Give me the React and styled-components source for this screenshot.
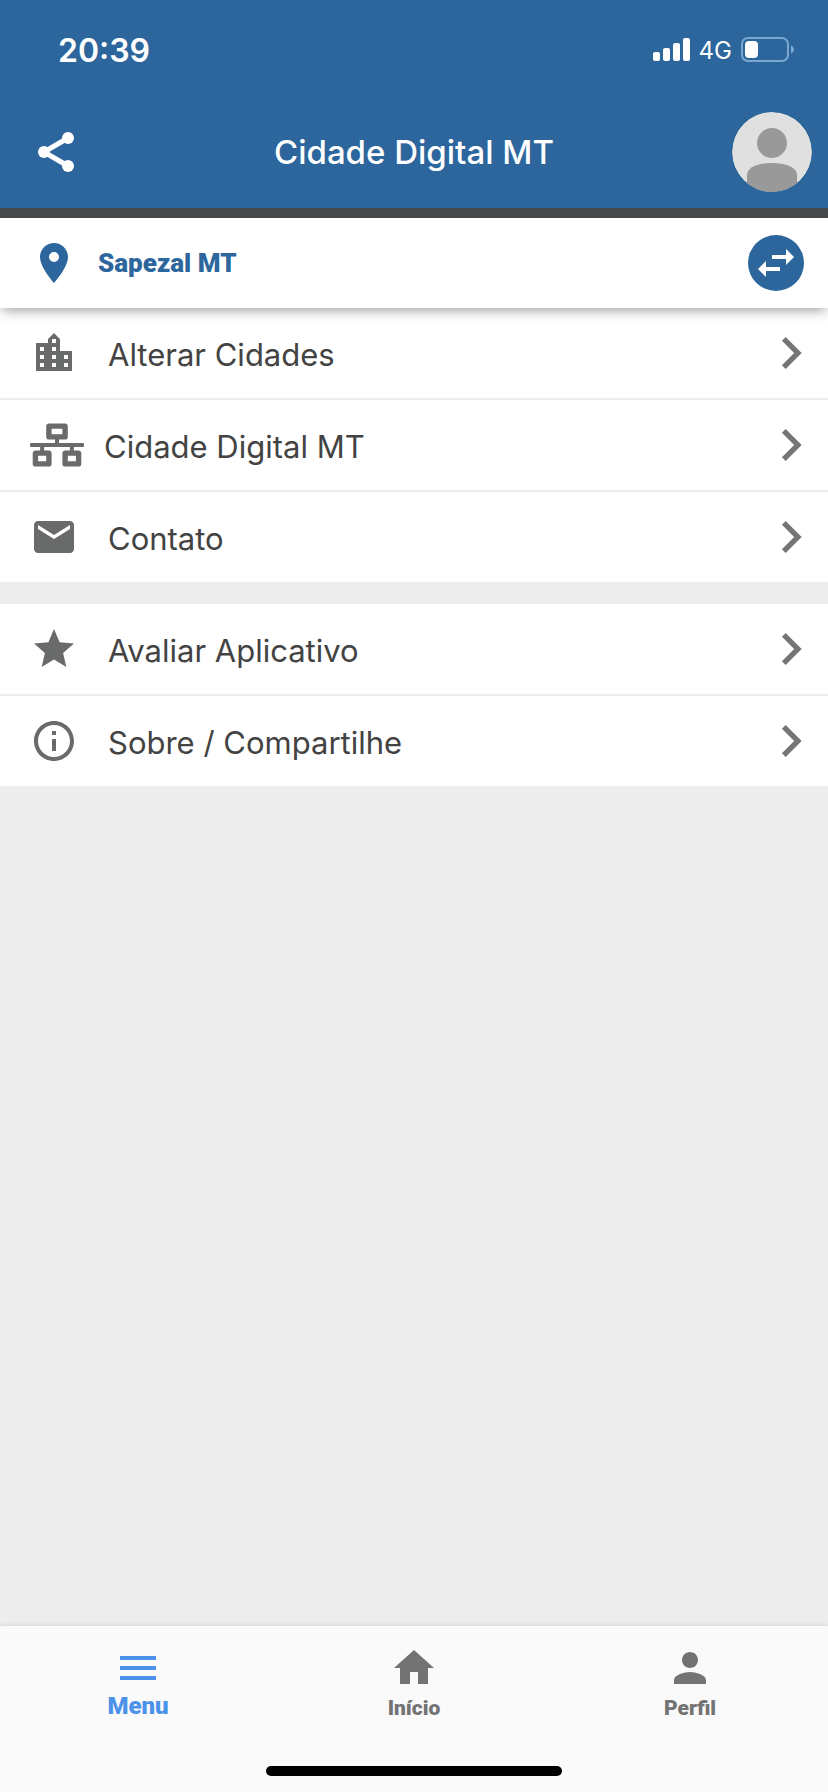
import React, { useState } from 'react';
import styled, { createGlobalStyle } from 'styled-components';
import {
  MdLocationOn,
  MdSwapHoriz,
  MdLocationCity,
  MdEmail,
  MdStar,
  MdInfoOutline,
  MdChevronRight,
  MdMenu,
  MdHome,
  MdPerson
} from 'react-icons/md';
import { FaNetworkWired } from 'react-icons/fa';

const colors = {
  primary: '#2c669c',
  strip: '#45484a',
  background: '#ededed',
  surface: '#ffffff',
  tabBar: '#fafafa',
  icon: '#696b6b',
  chevron: '#757575',
  text: '#434343',
  active: '#4b92e8',
  inactive: '#737373'
};

const GlobalStyle = createGlobalStyle`
  * {
    box-sizing: border-box;
  }

  body {
    margin: 0;
    background: ${colors.background};
    font-family: Inter, 'Liberation Sans', sans-serif;
  }

  button {
    border: none;
    padding: 0;
    background: none;
    font-family: inherit;
    cursor: pointer;
  }
`;

const Page = styled.div`
  min-height: 100vh;
  display: flex;
  flex-direction: column;
  background: ${colors.background};
`;

const Header = styled.header`
  position: relative;
  z-index: 2;
  background: ${colors.primary};
  color: white;
  padding-bottom: 4px;
  border-bottom: 10px solid ${colors.strip};
  box-sizing: content-box;
`;

const StatusBar = styled.div`
  height: 100px;
  padding: 0 34px 0 58px;
  display: flex;
  align-items: center;
  justify-content: space-between;
`;

const Clock = styled.time`
  font-size: 32px;
  font-weight: 600;
`;

const StatusIcons = styled.div`
  display: flex;
  align-items: center;
  gap: 8px;
  font-size: 24px;

  svg {
    display: block;
  }
`;

const Toolbar = styled.div`
  height: 104px;
  padding: 0 16px;
  display: grid;
  grid-template-columns: 80px 1fr 80px;
  align-items: center;
`;

const Title = styled.h1`
  margin: 0;
  font-size: 33px;
  font-weight: 500;
  text-align: center;
`;

const ShareButton = styled.button`
  justify-self: center;
  display: flex;
  color: white;
`;

const AvatarButton = styled.button`
  width: 80px;
  height: 80px;
  border-radius: 50%;
  overflow: hidden;

  svg {
    display: block;
  }
`;

const CityBar = styled.section`
  position: relative;
  z-index: 1;
  height: 90px;
  padding: 0 24px 0 30px;
  display: flex;
  align-items: center;
  background: ${colors.surface};
  color: ${colors.primary};
  box-shadow: 0 4px 12px -2px rgba(0, 0, 0, 0.4);
`;

const CityName = styled.strong`
  flex: 1;
  margin-left: 20px;
  font-family: Roboto, Inter, sans-serif;
  font-size: 26px;
  font-weight: 900;
`;

const SwapButton = styled.button`
  width: 56px;
  height: 56px;
  border-radius: 50%;
  display: flex;
  align-items: center;
  justify-content: center;
  background: ${colors.primary};
  color: white;
`;

const MenuGroup = styled.ul`
  list-style: none;
  margin: 0 0 22px;
  padding: 0;
  background: ${colors.surface};

  li + li {
    border-top: 2px solid ${colors.background};
  }
`;

const MenuLink = styled.a`
  height: 90px;
  padding: 0 5px 0 30px;
  display: flex;
  align-items: center;
  color: ${colors.text};
  font-size: 31px;
  text-decoration: none;
`;

const MenuIcon = styled.span`
  display: flex;
  margin-right: ${props => (props.$wide ? '20px' : '30px')};
  color: ${colors.icon};
`;

const MenuLabel = styled.span`
  flex: 1;
  padding-top: 2px;
`;

const TabBar = styled.nav`
  margin-top: auto;
  padding: 18px 0 16px;
  background: ${colors.tabBar};
  box-shadow: 0 -1px 4px rgba(0, 0, 0, 0.1);
`;

const Tabs = styled.div`
  display: grid;
  grid-template-columns: repeat(3, 1fr);
`;

const Tab = styled.button`
  display: flex;
  flex-direction: column;
  align-items: center;
  color: ${props => (props.$active ? colors.active : colors.inactive)};
`;

const TabLabel = styled.span`
  font-family: Roboto, Inter, sans-serif;
  font-size: ${props => (props.$active ? '24px' : '21px')};
  font-weight: 900;
  line-height: ${props => (props.$active ? '28px' : '32px')};
`;

const HomeIndicator = styled.div`
  width: 296px;
  height: 10px;
  margin: 42px auto 0;
  border-radius: 5px;
  background: black;
`;

const SignalIcon = () => (
  <svg width="38" height="24" viewBox="0 0 38 24" fill="white">
    <rect x="0" y="14" width="7" height="9" rx="2" />
    <rect x="10" y="10" width="7" height="13" rx="2" />
    <rect x="20" y="5" width="7" height="18" rx="2" />
    <rect x="30" y="0" width="7" height="23" rx="2" />
  </svg>
);

const BatteryIcon = () => (
  <svg width="54" height="26" viewBox="0 0 54 26">
    <rect x="2" y="1" width="46" height="23" rx="6" fill="none" stroke="#7ba8d1" strokeWidth="2" />
    <rect x="5" y="4" width="13" height="17" rx="4" fill="white" />
    <path d="M51 8.500c4 1.500 4 6.500 0 8z" fill="#7ba8d1" />
  </svg>
);

const ShareIcon = () => (
  <svg width="48" height="48" viewBox="0 0 48 48" fill="currentColor">
    <path d="M36 10L12 24l24 14" fill="none" stroke="currentColor" strokeWidth="5" />
    <circle cx="36" cy="10" r="6" />
    <circle cx="12" cy="24" r="6" />
    <circle cx="36" cy="38" r="6" />
  </svg>
);

const AvatarIcon = () => (
  <svg width="80" height="80" viewBox="0 0 80 80">
    <circle cx="40" cy="40" r="40" fill="#e0e0e0" />
    <circle cx="40" cy="31" r="15" fill="#999999" />
    <path d="M15 80V63C15 55 27 51 40 51s25 4 25 12v17z" fill="#999999" />
  </svg>
);

const menuGroups = [
  [
    { label: 'Alterar Cidades', icon: <MdLocationCity size={48} /> },
    { label: 'Cidade Digital MT', icon: <FaNetworkWired size={54} />, wide: true },
    { label: 'Contato', icon: <MdEmail size={48} /> }
  ],
  [
    { label: 'Avaliar Aplicativo', icon: <MdStar size={48} /> },
    { label: 'Sobre / Compartilhe', icon: <MdInfoOutline size={48} /> }
  ]
];

const tabs = [
  { id: 'menu', label: 'Menu', icon: <MdMenu size={48} /> },
  { id: 'inicio', label: 'Início', icon: <MdHome size={48} /> },
  { id: 'perfil', label: 'Perfil', icon: <MdPerson size={48} /> }
];

const App = () => {
  const [activeTab, setActiveTab] = useState('menu');

  return (
    <Page>
      <GlobalStyle />
      <Header>
        <StatusBar>
          <Clock>20:39</Clock>
          <StatusIcons>
            <SignalIcon />
            <span>4G</span>
            <BatteryIcon />
          </StatusIcons>
        </StatusBar>
        <Toolbar>
          <ShareButton aria-label="Compartilhar">
            <ShareIcon />
          </ShareButton>
          <Title>Cidade Digital MT</Title>
          <AvatarButton aria-label="Perfil">
            <AvatarIcon />
          </AvatarButton>
        </Toolbar>
      </Header>

      <CityBar>
        <MdLocationOn size={48} />
        <CityName>Sapezal MT</CityName>
        <SwapButton aria-label="Trocar cidade">
          <MdSwapHoriz size={48} />
        </SwapButton>
      </CityBar>

      <main>
        {menuGroups.map((group, index) => (
          <MenuGroup key={index}>
            {group.map(item => (
              <li key={item.label}>
                <MenuLink href="#">
                  <MenuIcon $wide={item.wide}>{item.icon}</MenuIcon>
                  <MenuLabel>{item.label}</MenuLabel>
                  <MdChevronRight size={64} color={colors.chevron} />
                </MenuLink>
              </li>
            ))}
          </MenuGroup>
        ))}
      </main>

      <TabBar>
        <Tabs>
          {tabs.map(tab => (
            <Tab
              key={tab.id}
              $active={tab.id === activeTab}
              onClick={() => setActiveTab(tab.id)}
            >
              {tab.icon}
              <TabLabel $active={tab.id === activeTab}>{tab.label}</TabLabel>
            </Tab>
          ))}
        </Tabs>
        <HomeIndicator />
      </TabBar>
    </Page>
  );
};

export default App;
